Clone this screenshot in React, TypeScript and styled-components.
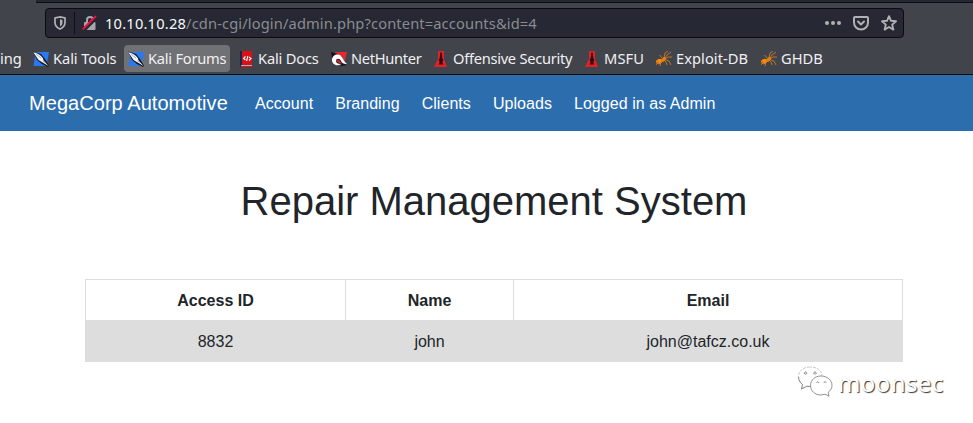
import React from "react";
import styled, { createGlobalStyle } from "styled-components";

const GlobalStyle = createGlobalStyle`
  *, *::before, *::after { box-sizing: border-box; }
  html, body { margin: 0; background: #fff; }
  body { width: 973px; height: 423px; overflow: hidden; font-family: "Liberation Sans", Arial, sans-serif; color: #212529; }
`;

const Screen = styled.div`
  width: 973px;
  height: 423px;
  overflow: hidden;
`;

const Chrome = styled.header`
  height: 75px;
  background: #42444b;
  border-bottom: 1px solid #0c0c0d;
  font-family: "Noto Sans", sans-serif;
  font-size: 14.67px;
`;

const TabEdge = styled.div`
  height: 3px;
  margin-left: 36px;
  background: #252731;
  border-bottom: 1px solid #0e0f14;
`;

const AddressBar = styled.div`
  display: flex;
  align-items: center;
  width: 859px;
  height: 30px;
  margin: 5px 0 0 45px;
  padding: 0 6px 0 8px;
  background: #262833;
  border: 1px solid #0c0c0f;
  border-radius: 4px;
  color: #8b8c91;
`;

const Divider = styled.span`
  width: 1px;
  height: 22px;
  margin: 0 7px 0 8px;
  background: #0e0f14;
`;

const Url = styled.span`
  flex: 1;
  margin-left: 7px;
  line-height: 20px;
  letter-spacing: 0.13px;
  white-space: nowrap;
`;

const Host = styled.span`
  color: #f9f9fa;
  letter-spacing: 0.2px;
`;

const BarActions = styled.span`
  display: flex;
  align-items: center;
  gap: 12px;
`;

const Bookmarks = styled.nav`
  display: flex;
  height: 27px;
  margin-top: 7px;
  color: #f0f0f2;
`;

const Bookmark = styled.a<{ $width: number; $active?: boolean; $plain?: boolean }>`
  display: flex;
  align-items: center;
  gap: 4px;
  flex: none;
  width: ${(p) => p.$width}px;
  height: 27px;
  margin-right: 4px;
  padding-left: ${(p) => (p.$plain ? 0 : 4)}px;
  border-radius: 4px;
  background: ${(p) => (p.$active ? "#707174" : "transparent")};
  white-space: nowrap;
`;

const Label = styled.span<{ $tracking?: number }>`
  padding-bottom: 2px;
  letter-spacing: ${(p) => p.$tracking ?? 0}px;
`;

const Icon = styled.svg`
  display: block;
  flex: none;
`;

const Navbar = styled.nav`
  display: flex;
  align-items: center;
  height: 56px;
  padding-left: 29px;
  background: #2c6dae;
  color: #fff;
`;

const Brand = styled.span`
  width: 226px;
  font-size: 20px;
  line-height: 30px;
  letter-spacing: 0.05px;
`;

const NavLinks = styled.div`
  display: flex;
  gap: 22px;
  padding-top: 2px;
  font-size: 16px;
  line-height: 24px;
  letter-spacing: 0.05px;
`;

const Title = styled.h1`
  margin: 46px 0 0;
  padding-left: 15px;
  font-size: 40px;
  line-height: 48px;
  font-weight: 400;
  text-align: center;
`;

const AccountTable = styled.table`
  width: 817px;
  margin: 54px 0 0 85px;
  border-collapse: collapse;
  table-layout: fixed;
  font-size: 16px;
  line-height: 24px;
  text-align: center;
`;

const Row = styled.tr<{ $shaded?: boolean }>`
  height: 41px;
  background: ${(p) => (p.$shaded ? "#ddd" : "#fff")};
`;

const HeadCell = styled.th`
  padding: 9px 8px 7px;
  border: 1px solid #ddd;
`;

const Cell = styled.td`
  padding: 9px 8px 7px;
  border: 1px solid #ddd;
`;

const Watermark = styled.div`
  position: absolute;
  left: 796px;
  top: 364px;
  display: flex;
  gap: 5px;
  height: 36px;
  color: #fff;
  font-family: "Noto Sans", sans-serif;
  font-size: 24px;
  line-height: 37px;
  letter-spacing: 0.4px;
  text-shadow: 1px 1px 1px #333;
`;

const KaliIcon = () => (
  <Icon width="16" height="16" viewBox="0 0 16 16">
    <path d="M2.500 1H16l-2.500 14H.5z" fill="#2979f2" />
    <path d="M0 .5 8 3l4 5 4 6.500-1 1.500-6-3-5-4z" fill="#16181d" />
    <path d="M.3 1.300C4 2 8 4 9.800 7l.8 2.500 4.900 5.500-5.800-3.500L5.500 9z" fill="#f3f5f6" />
    <path d="m3 3 5 4m1.500 2.500 2 2" stroke="#8b98a5" strokeWidth=".7" />
  </Icon>
);

const DocsIcon = () => (
  <Icon width="16" height="16" viewBox="0 0 16 16">
    <path d="M2 0h2v16H2z" fill="#182745" />
    <path d="M4 0h10v14H4z" fill="#da1019" />
    <path d="M3 14h11v1H3z" fill="#aeb0b5" />
    <path d="M3 15h11v1H3z" fill="#d5121b" />
    <path d="m7.500 5.500-2 2 2 1.500m3.500-3 2 1.500-2 2M9.800 5l-1.200 5" fill="none" stroke="#fff" strokeWidth="1.100" />
  </Icon>
);

const NetHunterIcon = () => (
  <Icon width="16" height="16" viewBox="0 0 16 16">
    <path d="M4 1h12l-3 12-5 1z" fill="#e52832" />
    <path d="m0 1 7 2 4 3 4 8-4 1-8-4-2-4z" fill="#15161a" />
    <path d="M1 9c0-5 6-7 9-4 2 2 3 6 6 8-4 0-5-1-6-3-1-3-5-3-5 0 0 2 2 3 5 3-1 2-9 2-9-4z" fill="#fff" />
    <path d="M5 10c1-2 3-1 4 0l2 3-3-1z" fill="#cf2932" />
  </Icon>
);

const MsfIcon = () => (
  <Icon width="16" height="16" viewBox="0 0 16 16">
    <path d="M5 0h6v8l3 8H1l4-8z" fill="#e02228" />
    <path d="M7.300 1.500h1.400l.6 5.500 1 2-1 2 1 2.500H5.700l1-2.500-1-2 1-2z" fill="#360b10" />
  </Icon>
);

const AntIcon = () => (
  <Icon width="16" height="16" viewBox="0 0 16 16">
    <path d="M6 7 3.500 4M8 7 9 2l3-2M9 7l2-3 4-3M9 8l3-2h4M10 9l3 1 2 4M8 9l2 2 1 3M5 10l-1 5" fill="none" stroke="#bc7528" />
    <ellipse cx="3" cy="10.500" rx="3" ry="2.500" transform="rotate(-20 3 10.500)" fill="#f28c16" />
    <ellipse cx="7.500" cy="8.500" rx="3" ry="1.900" transform="rotate(-35 7.500 8.500)" fill="#e77e0d" />
    <path d="m0 14 2-3m-2-2 3 4" stroke="#c86b12" />
  </Icon>
);

const bookmarks = [
  { label: "Kali Tools", width: 91, tracking: -0.08, Glyph: KaliIcon },
  { label: "Kali Forums", width: 106, tracking: -0.24, Glyph: KaliIcon, active: true },
  { label: "Kali Docs", width: 89, tracking: -0.18, Glyph: DocsIcon },
  { label: "NetHunter", width: 98, tracking: -0.32, Glyph: NetHunterIcon },
  { label: "Offensive Security", width: 147, tracking: -0.28, Glyph: MsfIcon },
  { label: "MSFU", width: 68, tracking: 0.1, Glyph: MsfIcon },
  { label: "Exploit-DB", width: 101, tracking: 0.05, Glyph: AntIcon },
  { label: "GHDB", width: 72, tracking: 0, Glyph: AntIcon },
];

export default function App() {
  return (
    <Screen>
      <GlobalStyle />
      <Chrome>
        <TabEdge />
        <AddressBar>
          <Icon width="12" height="14" viewBox="0 0 12 14">
            <path d="M6 .9 11 2v4.500c0 3-2 5.200-5 6.500C3 11.700 1 9.500 1 6.500V2z" fill="none" stroke="#b1b1b3" strokeWidth="1.700" />
            <path d="M6 3.300 8.500 4v2.500C8.500 8.500 7.500 9.500 6 10.500z" fill="#b1b1b3" />
          </Icon>
          <Divider />
          <Icon width="16" height="16" viewBox="0 0 16 16">
            <path d="M5 8V5a3 3 0 0 1 6 0v3" fill="none" stroke="#a7a7aa" strokeWidth="2" />
            <rect x="2" y="7" width="11.500" height="8" rx="1" fill="#a7a7aa" />
            <path d="M2 15 15 2" stroke="#262833" strokeWidth="3.500" />
            <path d="M.8 14.200 14 1" stroke="#e81146" strokeWidth="2" />
          </Icon>
          <Url><Host>10.10.10.28</Host>/cdn-cgi/login/admin.php?content=accounts&amp;id=4</Url>
          <BarActions>
            <Icon width="16" height="16" viewBox="0 0 16 16" fill="#b1b1b3">
              <circle cx="2" cy="8" r="2" /><circle cx="8" cy="8" r="2" /><circle cx="14" cy="8" r="2" />
            </Icon>
            <Icon width="16" height="16" viewBox="0 0 16 16" fill="none" stroke="#b1b1b3" strokeWidth="2" strokeLinecap="round" strokeLinejoin="round">
              <path d="M2 2h12a1 1 0 0 1 1 1v4.500a7 7 0 0 1-14 0V3a1 1 0 0 1 1-1z" />
              <path d="m5 6.500 3 3 3-3" />
            </Icon>
            <Icon width="16" height="16" viewBox="0 0 16 16" fill="none" stroke="#b1b1b3" strokeWidth="1.900" strokeLinejoin="round">
              <path d="m8 1.200 2 4.600 5 .5-3.800 3.300 1.200 5L8 12l-4.400 2.600 1.200-5L1 6.300l5-.5z" />
            </Icon>
          </BarActions>
        </AddressBar>
        <Bookmarks>
          <Bookmark $width={25} $plain><Label>ing</Label></Bookmark>
          {bookmarks.map(({ label, width, tracking, Glyph, active }) => (
            <Bookmark key={label} $width={width} $active={active}>
              <Glyph />
              <Label $tracking={tracking}>{label}</Label>
            </Bookmark>
          ))}
        </Bookmarks>
      </Chrome>
      <Navbar>
        <Brand>MegaCorp Automotive</Brand>
        <NavLinks>
          <span>Account</span><span>Branding</span><span>Clients</span><span>Uploads</span><span>Logged in as Admin</span>
        </NavLinks>
      </Navbar>
      <main>
        <Title>Repair Management System</Title>
        <AccountTable>
          <colgroup><col width="260" /><col width="168" /><col width="389" /></colgroup>
          <thead>
            <Row><HeadCell>Access ID</HeadCell><HeadCell>Name</HeadCell><HeadCell>Email</HeadCell></Row>
          </thead>
          <tbody>
            <Row $shaded><Cell>8832</Cell><Cell>john</Cell><Cell>john@tafcz.co.uk</Cell></Row>
          </tbody>
        </AccountTable>
      </main>
      <Watermark>
        <Icon width="37" height="36" viewBox="0 0 37 36" fill="#fff" strokeWidth=".8">
          <path d="M14 3C7 3 2.500 7 2.500 13c0 3 1.500 5.500 4 7.500L5.500 25l5-3c9 1 15.500-3 15.500-9.500S21 3 14 3z" stroke="#bbb" strokeDasharray="3 1" />
          <path d="M2.500 13c0 3 1.500 5.500 4 7.500L5.500 25l5-2.500h5" fill="none" stroke="#777" />
          <path d="M25 12c-6 0-10.500 4-10.500 9.500S19 31 25 31l4-.8 4 2-1-3.700c2.500-2 4-4 4-7C36 16 31 12 25 12z" stroke="#777" />
          <path d="m8 9.500 1.500-2 1.500 2-1.500.6zm9.500 0 1.500-2 1.500 2-1.500.6zM20.500 19l1.200-1.500L23 19m4.800 0 1.200-1.500 1.300 1.500" stroke="#777" />
        </Icon>
        <span>moonsec</span>
      </Watermark>
    </Screen>
  );
}
